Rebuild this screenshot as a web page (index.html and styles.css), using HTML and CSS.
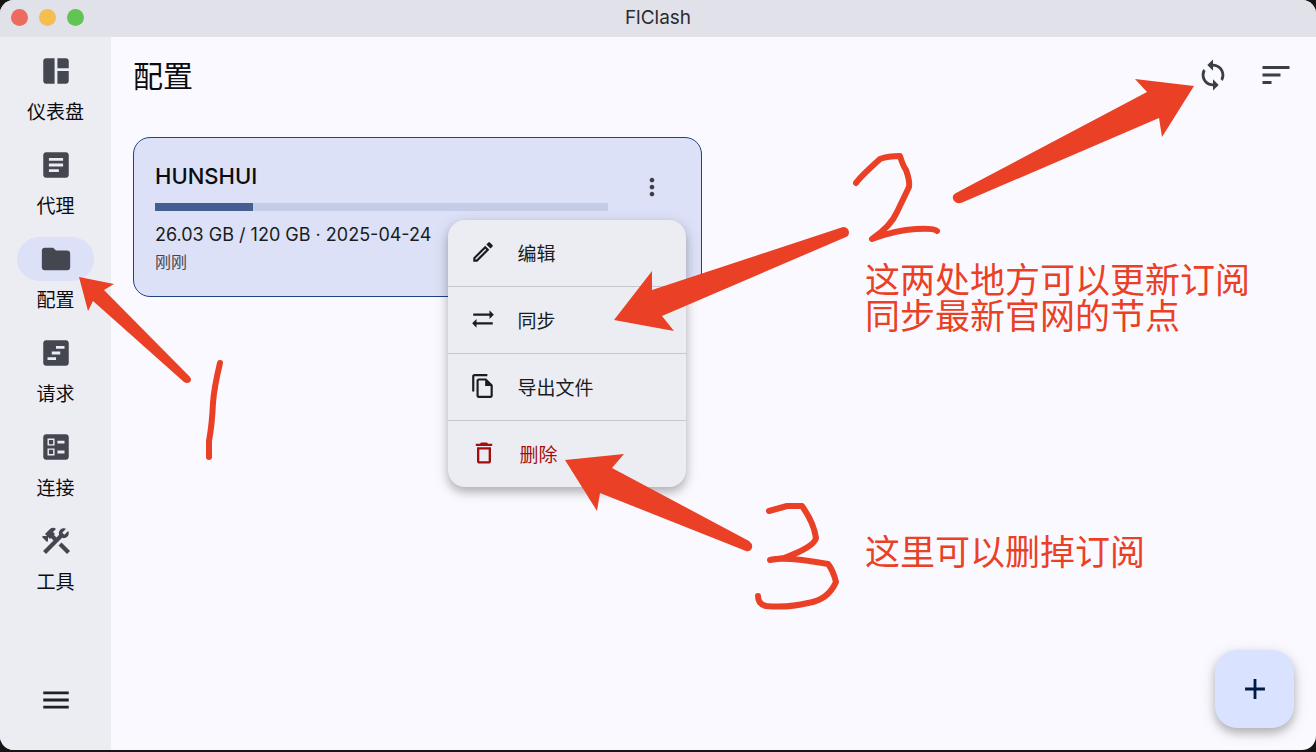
FILE: index.html
```html
<!DOCTYPE html>
<html lang="zh-CN">
<head>
    <meta charset="UTF-8">
    <meta name="viewport" content="width=device-width, initial-scale=1.0">
    <title>FlClash</title>
    <link rel="stylesheet" href="styles.css">
</head>
<body>
    <div class="window">
        <header class="titlebar">
            <div class="lights">
                <button class="light red" aria-label="关闭"></button>
                <button class="light yellow" aria-label="最小化"></button>
                <button class="light green" aria-label="缩放"></button>
            </div>
            <span class="app-name">FlClash</span>
        </header>

        <div class="layout">
            <nav class="sidebar">
                <button class="nav-item">
                    <span class="pill"><svg class="icon" viewBox="0 0 24 24"><path d="M11 21H5c-1.100 0-2-.9-2-2V5c0-1.100.9-2 2-2h6v18zm2 0h6c1.100 0 2-.9 2-2v-7h-8v9zm8-11V5c0-1.100-.9-2-2-2h-6v7h8z"/></svg></span>
                    <span class="label">仪表盘</span>
                </button>
                <button class="nav-item">
                    <span class="pill"><svg class="icon" viewBox="0 0 24 24"><path d="M19 3H5c-1.100 0-2 .9-2 2v14c0 1.100.9 2 2 2h14c1.100 0 2-.9 2-2V5c0-1.100-.9-2-2-2zm-5 14H7v-2h7v2zm3-4H7v-2h10v2zm0-4H7V7h10v2z"/></svg></span>
                    <span class="label">代理</span>
                </button>
                <button class="nav-item active">
                    <span class="pill"><svg class="icon" viewBox="0 0 24 24"><path d="M10 4H4c-1.100 0-1.990.9-1.990 2L2 18c0 1.100.9 2 2 2h16c1.100 0 2-.9 2-2V8c0-1.100-.9-2-2-2h-8l-2-2z"/></svg></span>
                    <span class="label">配置</span>
                </button>
                <button class="nav-item">
                    <span class="pill"><svg class="icon" viewBox="0 0 24 24"><path d="M19 3H5c-1.100 0-2 .9-2 2v14c0 1.100.9 2 2 2h14c1.100 0 2-.9 2-2V5c0-1.100-.9-2-2-2zm-7 14H6v-2h6v2zm3-4H9v-2h6v2zm3-4h-6V7h6v2z"/></svg></span>
                    <span class="label">请求</span>
                </button>
                <button class="nav-item">
                    <span class="pill"><svg class="icon" viewBox="0 0 24 24"><path fill-rule="evenodd" d="M13 9.500h5v-2h-5v2zm0 7h5v-2h-5v2zm6 4.500H5c-1.100 0-2-.9-2-2V5c0-1.100.9-2 2-2h14c1.100 0 2 .9 2 2v14c0 1.100-.9 2-2 2zM6 11h5V6H6v5zm1-4h3v3H7V7zM6 18h5v-5H6v5zm1-4h3v3H7v-3z"/></svg></span>
                    <span class="label">连接</span>
                </button>
                <button class="nav-item">
                    <span class="pill"><svg class="icon" viewBox="0 0 24 24"><path d="M13.783 15.172l2.121-2.121 5.996 5.996-2.121 2.121zM17.500 10c1.930 0 3.500-1.570 3.500-3.500 0-.58-.16-1.120-.41-1.600l-2.700 2.700-1.490-1.490 2.700-2.700c-.48-.25-1.020-.41-1.600-.41C15.570 3 14 4.570 14 6.500c0 .41.08.8.21 1.160l-1.850 1.850-1.780-1.780.71-.71-1.410-1.410L12 3.490c-1.170-1.170-3.070-1.170-4.240 0L4.220 7.030l1.410 1.410H2.810l-.71.71 3.540 3.540.71-.71V9.150l1.410 1.410.71-.71 1.780 1.780-7.410 7.410 2.120 2.120L16.340 9.790c.36.13.75.21 1.160.21z"/></svg></span>
                    <span class="label">工具</span>
                </button>
                <button class="menu-toggle" aria-label="菜单">
                    <svg class="icon" viewBox="0 0 24 24"><path d="M3 18h18v-2H3v2zm0-5h18v-2H3v2zm0-7v2h18V6H3z"/></svg>
                </button>
            </nav>

            <main class="content">
                <div class="page-header">
                    <h1>配置</h1>
                    <div class="actions">
                        <button class="icon-button" aria-label="同步全部">
                            <svg class="icon" viewBox="0 0 24 24"><path d="M12 4V1L8 5l4 4V6c3.310 0 6 2.690 6 6 0 1.010-.25 1.970-.7 2.800l1.460 1.460C19.540 15.030 20 13.570 20 12c0-4.420-3.580-8-8-8zm0 14c-3.310 0-6-2.690-6-6 0-1.010.25-1.970.7-2.800L5.240 7.740C4.460 8.970 4 10.430 4 12c0 4.420 3.580 8 8 8v3l4-4-4-4v3z"/></svg>
                        </button>
                        <button class="icon-button" aria-label="排序">
                            <svg class="icon sort" viewBox="0 0 24 24"><path d="M3 18h6v-2H3v2zM3 6v2h18V6H3zm0 7h12v-2H3v2z"/></svg>
                        </button>
                    </div>
                </div>

                <div class="profiles">
                    <section class="card">
                        <div class="card-body">
                            <h2>HUNSHUI</h2>
                            <progress class="usage" value="26.03" max="120" aria-label="流量"></progress>
                            <p class="traffic">26.03 GB / 120 GB · 2025-04-24</p>
                            <p class="updated">刚刚</p>
                        </div>
                        <button class="icon-button" aria-label="更多">
                            <svg class="icon more" viewBox="0 0 24 24"><path d="M12 8c1.100 0 2-.9 2-2s-.9-2-2-2-2 .9-2 2 .9 2 2 2zm0 2c-1.100 0-2 .9-2 2s.9 2 2 2 2-.9 2-2-.9-2-2-2zm0 6c-1.100 0-2 .9-2 2s.9 2 2 2 2-.9 2-2-.9-2-2-2z"/></svg>
                        </button>

                        <div class="menu">
                            <button class="menu-item">
                                <svg viewBox="0 0 24 24"><path fill-rule="evenodd" d="M14.060 9.020l.92.92L5.920 19H5v-.92l9.060-9.060M17.660 3c-.25 0-.51.1-.7.29l-1.830 1.830 3.750 3.750 1.830-1.830c.39-.39.39-1.020 0-1.410l-2.340-2.340c-.2-.2-.45-.29-.71-.29zm-3.600 3.190L3 17.250V21h3.750L17.810 9.940l-3.750-3.750z"/></svg>
                                编辑
                            </button>
                            <button class="menu-item">
                                <svg viewBox="0 0 24 24"><path d="M22 8l-4-4v3H3v2h15v3l4-4zM2 16l4 4v-3h15v-2H6v-3l-4 4z"/></svg>
                                同步
                            </button>
                            <button class="menu-item">
                                <svg viewBox="0 0 24 24"><path d="M16 1H4c-1.100 0-2 .9-2 2v14h2V3h12V1zm-1 4H8c-1.100 0-1.990.9-1.990 2L6 21c0 1.100.89 2 1.990 2H19c1.100 0 2-.9 2-2V11l-6-6zM8 21V7h6v5h5v9H8z"/></svg>
                                导出文件
                            </button>
                            <button class="menu-item danger">
                                <svg viewBox="0 0 24 24"><path d="M16 9v10H8V9h8m-1.500-6h-5l-1 1H5v2h14V4h-3.500l-1-1zM18 7H6v12c0 1.100.9 2 2 2h8c1.100 0 2-.9 2-2V7z"/></svg>
                                删除
                            </button>
                        </div>
                    </section>
                </div>

                <button class="fab" aria-label="添加">
                    <svg class="icon" viewBox="0 0 24 24"><path d="M19 13h-6v6h-2v-6H5v-2h6V5h2v6h6v2z"/></svg>
                </button>
            </main>
        </div>

        <!-- hand-drawn guide on top of the window -->
        <svg class="guide" width="1316" height="752" viewBox="0 0 1316 752">
            <g class="arrows">
                <path d="M79 277L114 284L104 290L190 377Q192 380 190 382Q187 384 184 382L93 301L88 311Z"/>
                <path d="M1194 86L1135 79L1147 92L956 193Q952 195 953 199Q955 204 961 203L1159 118L1162 137Z"/>
                <path d="M614 320L652 271L652 290L843 227Q848 227 849 232Q849 236 846 237L662 316L674 331Z"/>
                <path d="M565 460L624 454L612 468L749 541Q753 544 752 548Q750 552 746 551L600 493L597 511Z"/>
            </g>
            <g class="strokes">
                <path d="M220 363Q214 388 213 403Q212 425 209 441V457"/>
                <path d="M856 183Q860 177 880 159Q888 156 900 156Q903 166 906 170Q910 181 909 187L897 212Q891 226 872 239Q896 230 916 229Q934 228 937 231"/>
                <path d="M769 511L787 506H802Q814 523 816 538Q814 547 784 558L770 560Q784 556 828 564Q833 570 836 582Q828 600 808 603Q788 608 766 606Q758 604 758 596"/>
            </g>
        </svg>
        <p class="note note-sync">这两处地方可以更新订阅<br>同步最新官网的节点</p>
        <p class="note note-delete">这里可以删掉订阅</p>
    </div>
</body>
</html>
```
FILE: styles.css
```css
* {
    box-sizing: border-box;
}

body {
    margin: 0;
    height: 100vh;
    padding-bottom: 2px;
    background-color: #151515;
    font-family: Inter, "Noto Sans CJK SC", sans-serif;
    color: #191c20;
    overflow: hidden;
}

h1, h2, p {
    margin: 0;
    font-weight: 400;
}

button {
    padding: 0;
    border: none;
    background: none;
    font-family: inherit;
    color: inherit;
    cursor: pointer;
}

svg {
    display: block;
    fill: currentColor;
}

.window {
    position: relative;
    display: flex;
    flex-direction: column;
    height: 100%;
    border-radius: 14px;
    background-color: #faf9ff;
    overflow: hidden;
}

.titlebar {
    display: grid;
    grid-template-columns: 1fr auto 1fr;
    align-items: center;
    height: 37px;
    padding: 0 11px 2px;
    background-color: #e1e2e9;
}

.lights {
    display: flex;
    gap: 11px;
}

.light {
    width: 17px;
    height: 17px;
    border-radius: 50%;
}

.red { background-color: #ed6a5e; }
.yellow { background-color: #f5bf4f; }
.green { background-color: #61c554; }

.app-name {
    font-size: 19px;
    color: #2b2b2f;
}

.layout {
    display: flex;
    flex: 1;
}

.icon {
    width: 34px;
    height: 34px;
}

/* sidebar */
.sidebar {
    display: flex;
    flex-direction: column;
    gap: 16px;
    width: 111px;
    padding: 12px 0 28px;
    background-color: #ecedf3;
    color: #44474f;
}

.nav-item {
    display: flex;
    flex-direction: column;
    align-items: center;
    gap: 6px;
}

.pill {
    display: flex;
    align-items: center;
    justify-content: center;
    width: 77px;
    height: 44px;
    border-radius: 22px;
}

.active .pill {
    background-color: #dce1f8;
}

.label {
    font-size: 19px;
    line-height: 28px;
    color: #0b0c0f;
}

.menu-toggle {
    display: flex;
    align-items: center;
    justify-content: center;
    height: 44px;
    margin-top: auto;
    color: #1f2028;
}

/* profiles page */
.content {
    position: relative;
    flex: 1;
    padding: 0 22px;
}

.page-header {
    display: flex;
    align-items: center;
    justify-content: space-between;
    height: 76px;
    margin-bottom: 24px;
}

h1 {
    padding-top: 2px;
    font-size: 30px;
    line-height: 40px;
    color: #0b0c0f;
}

.actions {
    display: flex;
    gap: 7px;
    margin-right: -10px;
}

.icon-button {
    display: flex;
    flex: none;
    align-items: center;
    justify-content: center;
    width: 56px;
    height: 56px;
    color: #3b3e46;
}

.sort {
    width: 36px;
    height: 36px;
}

.more {
    width: 28px;
    height: 28px;
}

.profiles {
    display: grid;
    grid-template-columns: 1fr 1fr;
    gap: 24px;
}

.card {
    position: relative;
    display: flex;
    gap: 16px;
    padding: 21px;
    border: 1px solid #1f4482;
    border-radius: 17px;
    background-color: #dce1f7;
}

.card-body {
    flex: 1;
}

h2 {
    font-size: 22px;
    font-weight: 500;
    line-height: 34px;
    color: #0b0c0f;
}

.usage {
    display: block;
    width: 100%;
    height: 8px;
    margin: 10px 0;
    border: none;
    appearance: none;
}

.usage::-webkit-progress-bar {
    background-color: #c5cce8;
}

.usage::-webkit-progress-value {
    background-color: #455e91;
}

.traffic {
    font-size: 18px;
    line-height: 28px;
}

.updated {
    font-size: 16px;
    line-height: 26px;
    color: #44474f;
}

/* popup menu of the card */
.menu {
    position: absolute;
    top: 82px;
    right: 15px;
    width: 238px;
    border-radius: 17px;
    background-color: #ecedf3;
    box-shadow: 0 5px 8px rgba(0, 0, 0, 0.2), 0 4px 16px rgba(0, 0, 0, 0.14);
    overflow: hidden;
}

.menu-item {
    display: flex;
    align-items: center;
    gap: 22px;
    width: 100%;
    height: 66px;
    padding: 0 22px 2px;
    font-size: 19px;
    text-align: left;
}

.menu-item + .menu-item {
    height: 67px;
    border-top: 1px solid #c4c6d0;
}

.menu-item svg {
    width: 26px;
    height: 26px;
}

.danger {
    color: #a30d0d;
}

.menu .danger svg {
    width: 28px;
    height: 28px;
}

.fab {
    position: absolute;
    right: 22px;
    bottom: 22px;
    display: flex;
    align-items: center;
    justify-content: center;
    width: 79px;
    height: 78px;
    border-radius: 22px;
    background-color: #d9e2ff;
    box-shadow: 0 5px 8px rgba(0, 0, 0, 0.2), 0 4px 16px rgba(0, 0, 0, 0.14);
    color: #001a43;
}

/* guide drawn over the window */
.guide {
    position: absolute;
    top: 0;
    left: 0;
    pointer-events: none;
}

.arrows {
    fill: #ea4025;
}

.strokes {
    fill: none;
    stroke: #ea4025;
    stroke-width: 6;
    stroke-linecap: round;
    stroke-linejoin: round;
}

.note {
    position: absolute;
    left: 865px;
    font-family: "Noto Sans CJK SC", sans-serif;
    font-size: 35px;
    line-height: 36px;
    white-space: nowrap;
    color: #ea4025;
}

.note-sync {
    top: 260px;
}

.note-delete {
    top: 532px;
}
```
